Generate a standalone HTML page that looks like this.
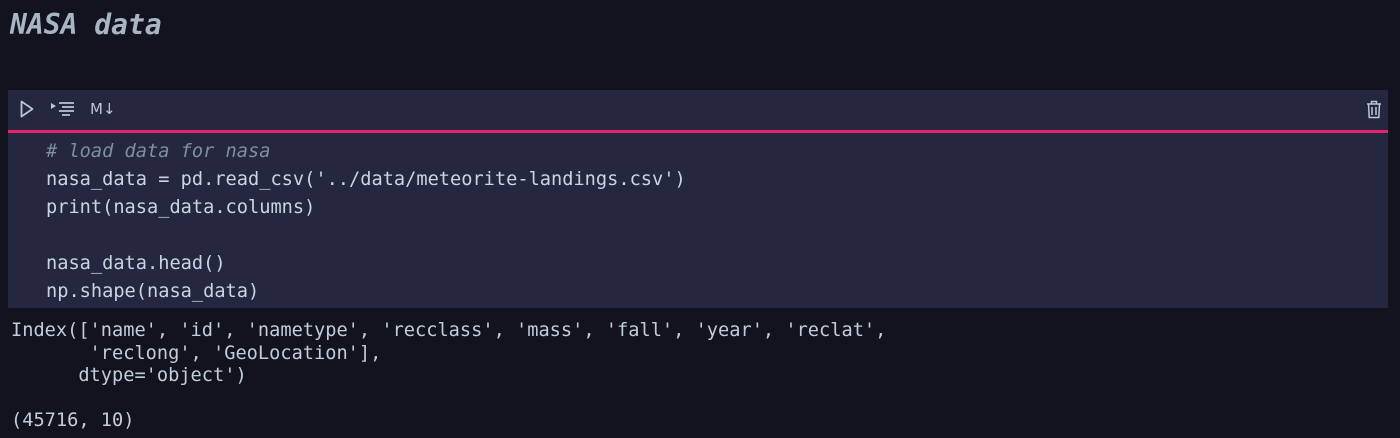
<!DOCTYPE html>
<html><head><style>
body{margin:0;width:1400px;height:438px;background:#13131f;overflow:hidden;font-family:"DejaVu Sans Mono","Liberation Mono",monospace;position:relative}
.t{position:absolute;left:10px;top:8px;font-size:28px;font-weight:bold;font-style:italic;color:#a8b6c4}
.cell{position:absolute;left:8px;top:90px;width:1380px;height:218px;background:#25263f}
.bar{height:40px;position:relative}
.pink{position:absolute;left:0;right:0;top:40px;height:3px;background:#e8216f}
.code{position:absolute;left:38px;top:48px;font-size:18.65px;line-height:28px;color:#c8d6e2;white-space:pre}
.cm{color:#7f8ea3;font-style:italic}
.out{position:absolute;left:11px;top:320px;font-size:18.65px;line-height:22.5px;color:#c0cedb;white-space:pre}
.ic{position:absolute;color:#b9c6d6}
</style></head><body>
<div class="t">NASA data</div>
<div class="cell">
 <div class="bar">
  <svg class="ic" style="left:12px;top:10px" width="14" height="18" viewBox="0 0 14 18"><path d="M1.5 1.5 L12.5 9 L1.5 16.5 Z" fill="none" stroke="#b9c6d6" stroke-width="1.8" stroke-linejoin="round"/></svg>
  <svg class="ic" style="left:42px;top:11px" width="26" height="16" viewBox="0 0 26 16"><path d="M1 2 L6 5 L1 8 Z" fill="#b9c6d6"/><path d="M9 2 H24 M12 6 H24 M9 10 H24 M12 14 H20" stroke="#b9c6d6" stroke-width="1.8"/></svg>
  <div class="ic" style="left:82px;top:10px;font-family:'DejaVu Sans',sans-serif;font-size:15px">M↓</div>
  <svg class="ic" style="left:1358px;top:10px" width="16" height="19" viewBox="0 0 16 19"><path d="M1 4 H15 M5.5 4 V1.5 H10.5 V4 M2.5 4 L3.2 17.5 H12.8 L13.5 4 M6 7 V15 M10 7 V15" fill="none" stroke="#b9c6d6" stroke-width="1.5"/></svg>
 </div>
 <div class="pink"></div>
 <div class="code"><span class="cm"># load data for nasa</span>
nasa_data = pd.read_csv('../data/meteorite-landings.csv')
print(nasa_data.columns)

nasa_data.head()
np.shape(nasa_data)</div>
</div>
<div class="out">Index(['name', 'id', 'nametype', 'recclass', 'mass', 'fall', 'year', 'reclat',
       'reclong', 'GeoLocation'],
      dtype='object')

(45716, 10)</div>
</body></html>
